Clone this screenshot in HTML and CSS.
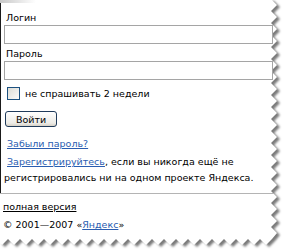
FILE: index.html
```html
<!DOCTYPE html>
<html lang="ru">
<head>
  <meta charset="UTF-8" />
  <title>Яндекс — вход</title>
  <link rel="stylesheet" href="styles.css">
</head>
<body>
<svg class="edge" width="284" height="250" viewBox="0 0 284 250">
  <defs>
    <filter id="soft" x="-5%" y="-5%" width="110%" height="110%">
      <feGaussianBlur stdDeviation="0.9"/>
    </filter>
  </defs>
  <polygon class="shadow" filter="url(#soft)" transform="translate(3,2)"
    points="-1,-1 271,-1 277,5 271,11 277,17 271,23 277,29 271,35 277,41 271,47 277,53 271,59 277,65 271,71 277,77 271,83 277,89 271,95 277,101 271,107 277,113 271,119 277,125 271,131 277,137 271,143 277,149 271,155 277,161 271,167 277,173 271,179 277,185 271,191 277,197 271,203 277,209 271,215 277,221 271,227 277,233 272,239 266,245 260,239 254,245 248,239 242,245 236,239 230,245 224,239 218,245 212,239 206,245 200,239 194,245 188,239 182,245 176,239 170,245 164,239 158,245 152,239 146,245 140,239 134,245 128,239 122,245 116,239 110,245 104,239 98,245 92,239 86,245 80,239 74,245 68,239 62,245 56,239 50,245 44,239 38,245 32,239 26,245 20,239 14,245 8,239 2,245 -1,242"/>
  <polygon class="sheet"
    points="-1,-1 271,-1 277,5 271,11 277,17 271,23 277,29 271,35 277,41 271,47 277,53 271,59 277,65 271,71 277,77 271,83 277,89 271,95 277,101 271,107 277,113 271,119 277,125 271,131 277,137 271,143 277,149 271,155 277,161 271,167 277,173 271,179 277,185 271,191 277,197 271,203 277,209 271,215 277,221 271,227 277,233 272,239 266,245 260,239 254,245 248,239 242,245 236,239 230,245 224,239 218,245 212,239 206,245 200,239 194,245 188,239 182,245 176,239 170,245 164,239 158,245 152,239 146,245 140,239 134,245 128,239 122,245 116,239 110,245 104,239 98,245 92,239 86,245 80,239 74,245 68,239 62,245 56,239 50,245 44,239 38,245 32,239 26,245 20,239 14,245 8,239 2,245 -1,242"/>
</svg>

<div class="page">
  <div class="top-shade"></div>
  <div class="main">
    <form class="login">
      <label for="login">Логин</label>
      <input class="field" type="text" id="login" name="login"/>

      <label for="passwd">Пароль</label>
      <input class="field" type="password" id="passwd" name="passwd"/>

      <label class="remember"><span class="box"></span>не спрашивать 2 недели</label>

      <button type="button" class="btn">Войти</button>
    </form>

    <p class="forgot"><a href="#">Забыли пароль?</a></p>
    <p class="reg"><a href="#">Зарегистрируйтесь</a>, если вы никогда ещё не регистрировались ни на одном проекте Яндекса.</p>
  </div>

  <div class="footer">
    <a href="#" class="full">полная версия</a>
    <p class="copy">© 2001—2007 «<a href="#">Яндекс</a>»</p>
  </div>
</div>
</body>
</html>
```

FILE: styles.css
```css
body {
  font-family: "DejaVu Sans", Verdana, sans-serif;
  font-size: 9.5px;
  color: #000;
  background: #fff;
  margin: 0;
  width: 284px;
  height: 250px;
  overflow: hidden;
  position: relative;
}
.edge {
  position: absolute;
  left: 0;
  top: 0;
  z-index: 0;
}
.edge .shadow {
  fill: #7a7a7a;
}
.edge .sheet {
  fill: #fff;
}
.page {
  position: relative;
  z-index: 1;
  width: 270px;
}
.top-shade {
  height: 3px;
  width: 36px;
  background: linear-gradient(to right, #c8c8c8, rgba(255,255,255,0));
}
.main {
  border-left: 1px solid #1a1a1a;
  padding: 8px 0 7px 3px;
}
a {
  color: #2a5db0;
}
.login label {
  display: block;
  padding-left: 2px;
  line-height: 13px;
}
.field {
  display: block;
  box-sizing: border-box;
  width: 269px;
  height: 19px;
  margin: 0 0 3px;
  border: 1px solid #a5a5a5;
  padding: 0 2px;
  background: #fff;
}
.login label + .field {
  margin-top: 1px;
}
.login .remember {
  display: flex;
  align-items: center;
  gap: 5px;
  height: 14px;
  margin-top: 6px;
  padding-left: 3px;
}
.box {
  width: 11px;
  height: 11px;
  border: 1px solid #1c5180;
  background: linear-gradient(135deg, #dcdcd6, #fbfbfa);
}
.btn {
  display: block;
  margin: 11px 0 0 1px;
  height: 16px;
  padding: 0 10px;
  font: inherit;
  line-height: 13px;
  color: #000;
  border: 1px solid #1f3a5a;
  border-radius: 3px;
  background: linear-gradient(#fff, #ecebe6 80%, #d6d0c5);
}
.forgot {
  margin: 10px 0 0 3px;
  line-height: 13px;
}
.reg {
  margin: 4px 0 0;
  line-height: 16px;
  text-indent: 3px;
}
.footer {
  border-top: 1px solid #b4b4b4;
  width: 271px;
  padding: 5px 0 0 3px;
  line-height: 16px;
}
.full {
  color: #000;
}
.copy {
  margin: 2px 0 0;
}
```
